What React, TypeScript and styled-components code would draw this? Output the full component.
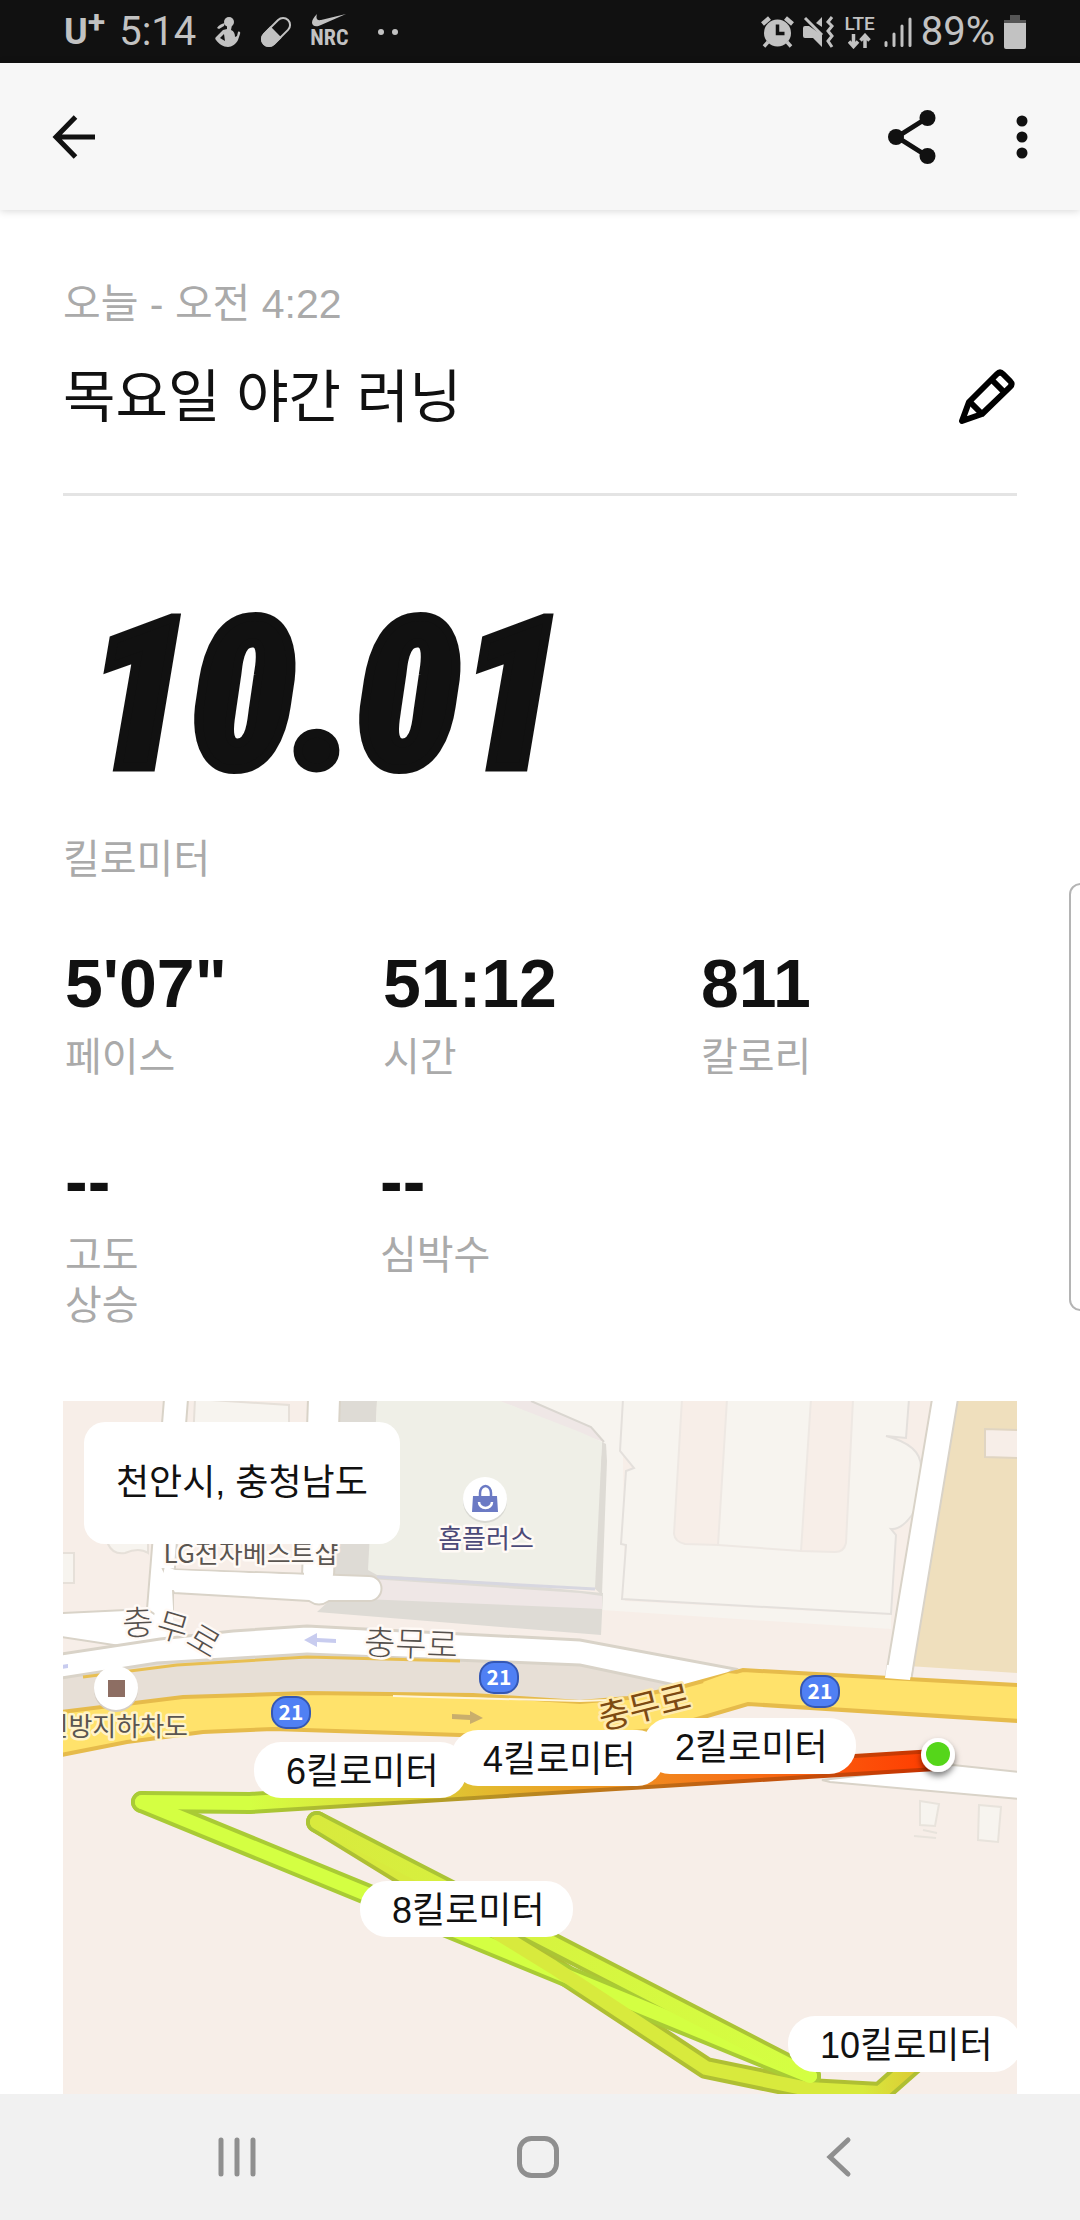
import React from 'react';
import styled, { createGlobalStyle } from 'styled-components';

const ink = '#111111';
const muted = '#aaaaaa';
const statusInk = '#c2c2c2';
const textFont = '"Liberation Sans", "Noto Sans CJK KR", sans-serif';
const mapFont = '"Noto Sans CJK KR", sans-serif';

const GlobalStyle = createGlobalStyle`
  * { box-sizing: border-box; }
  body { margin: 0; background: #ffffff; color: ${ink}; font-family: ${textFont}; }
  h1, p, dl, dd, dt { margin: 0; font-weight: 400; }
  button { border: 0; padding: 0; background: none; color: inherit; cursor: pointer; }
  svg { display: block; }
`;

const Screen = styled.div`
  display: flex;
  flex-direction: column;
  height: 100vh;
  overflow: hidden;
  position: relative;
`;

const StatusBar = styled.header`
  display: flex;
  flex: none;
  align-items: center;
  justify-content: space-between;
  height: 63px;
  padding: 0 54px 0 64px;
  background: #111111;
  color: ${statusInk};
`;

const StatusGroup = styled.div<{ $gap: number }>`
  display: flex;
  align-items: center;
  gap: ${(p) => p.$gap}px;
`;

const StatusText = styled.span`
  font: 400 40px/48px Roboto, sans-serif;
`;

const Carrier = styled.span`
  display: flex;
  align-items: flex-start;
  font: 700 36px/48px Roboto, sans-serif;
  sup { font-size: 32px; line-height: 28px; }
`;

const Stack = styled.span`
  display: flex;
  flex-direction: column;
  align-items: center;
`;

const TinyLabel = styled.span`
  font: 500 19px/18px Roboto, sans-serif;
`;

const NrcLabel = styled.span`
  font: 700 22px/22px "Roboto Condensed", Roboto, sans-serif;
`;

const AppBar = styled.nav`
  display: flex;
  flex: none;
  align-items: center;
  justify-content: space-between;
  height: 147px;
  padding: 0 28px 0 32px;
  background: #f7f7f7;
  box-shadow: 0 1px 8px rgba(0, 0, 0, 0.16);
  z-index: 1;
`;

const BarActions = styled.div`
  display: flex;
  gap: 48px;
`;

const IconButton = styled.button<{ $w: number }>`
  display: flex;
  align-items: center;
  justify-content: center;
  width: ${(p) => p.$w}px;
  height: 80px;
`;

const Content = styled.main`
  flex: 1;
  min-height: 0;
  overflow: hidden;
  padding: 69px 63px 0;
`;

const RunHeader = styled.section`
  padding-bottom: 56px;
  border-bottom: 3px solid #e4e4e4;
`;

const Caption = styled.p`
  color: ${muted};
  font-size: 41px;
  line-height: 50px;
`;

const TitleRow = styled.div`
  display: flex;
  align-items: center;
  justify-content: space-between;
  margin-top: 28px;
`;

const Title = styled.h1`
  font-size: 57px;
  line-height: 80px;
`;

const Distance = styled.section`
  margin-top: 110px;
`;

const DistanceValue = styled.p`
  padding-left: 24px;
  font: italic 900 209px/180px "Roboto Condensed", Roboto, sans-serif;
  -webkit-text-stroke: 9px ${ink};
`;

const Unit = styled.p`
  margin-top: 48px;
  color: ${muted};
  font-size: 40px;
  line-height: 50px;
`;

const StatRow = styled.dl<{ $inset: number }>`
  display: grid;
  grid-template-columns: repeat(3, 1fr);
  margin-top: 59px;
  padding-right: ${(p) => p.$inset}px;
`;

const Stat = styled.div`
  display: flex;
  flex-direction: column-reverse;
  justify-content: flex-end;
  gap: 9px;
  padding-left: 2px;
`;

const StatLabel = styled.dt`
  color: ${muted};
  font-size: 40px;
  line-height: 50px;
  white-space: pre-line;
`;

const StatValue = styled.dd`
  font-size: 68px;
  font-weight: 700;
  line-height: 80px;
`;

const MapFrame = styled.section`
  position: relative;
  margin-top: 71px;
  aspect-ratio: 1;
  overflow: hidden;
  background: #f7eee8;
`;

const MapArt = styled.svg`
  width: 100%;
  height: 100%;
`;

const PlaceCard = styled.div`
  position: absolute;
  top: 21px;
  left: 21px;
  padding: 36px 32px;
  border-radius: 21px;
  background: #ffffff;
  font-size: 36px;
  line-height: 50px;
`;

const KmPill = styled.span<{ $x: number; $y: number }>`
  position: absolute;
  left: ${(p) => (p.$x / 954) * 100}%;
  top: ${(p) => (p.$y / 954) * 100}%;
  padding: 4px 28px 0 32px;
  border-radius: 27px;
  background: #ffffff;
  font-size: 36px;
  line-height: 52px;
  white-space: nowrap;
`;

const EdgeHandle = styled.div`
  position: absolute;
  top: 883px;
  right: -12px;
  width: 23px;
  height: 428px;
  border: 2px solid #b4b4b4;
  border-radius: 14px;
  background: #ffffff;
  z-index: 2;
`;

const SystemNav = styled.nav`
  display: flex;
  flex: none;
  justify-content: center;
  height: 126px;
  padding-right: 4px;
  background: #f1f1f1;
  color: #8f8f8f;
`;

const NavButton = styled.button`
  display: flex;
  align-items: center;
  justify-content: center;
  width: 28%;
`;

const stats = [
  [
    { label: '페이스', value: '5\'07"' },
    { label: '시간', value: '51:12' },
    { label: '칼로리', value: '811' },
  ],
  [
    { label: '고도\n상승', value: '--' },
    { label: '심박수', value: '--' },
  ],
];

const markers = [
  { km: 6, x: 191, y: 341 },
  { km: 4, x: 388, y: 329 },
  { km: 2, x: 580, y: 317 },
  { km: 8, x: 297, y: 480 },
  { km: 10, x: 725, y: 615 },
];

const shields = [
  [228, 311],
  [436, 276],
  [757, 290],
];

function ChildIcon() {
  return (
    <svg width="28" height="32" viewBox="0 0 28 32" fill="currentColor">
      <circle cx="15" cy="6" r="5" />
      <path d="M13 9h5l-1 5c3 1 4 4 4 7l2-1 1-4c1-1 3 0 2 2l-2 6c-2 4-6 7-10 7-5 0-9-3-12-7-1-1-1-2 0-3l7-7 4-1z" />
      <path d="M3 12c2-3 4-4 8-5l-1 3-5 3z" />
      <path d="M6 22l4-4 1 7z" fill="#111111" />
    </svg>
  );
}

function PillIcon() {
  return (
    <svg width="32" height="32" viewBox="0 0 32 32">
      <g transform="rotate(45 16 16)">
        <rect x="9" y="-1" width="14" height="34" rx="7" fill="none" stroke="currentColor" strokeWidth="2" />
        <path d="M8 16h16v10a8 8 0 0 1-16 0z" fill="currentColor" />
      </g>
    </svg>
  );
}

function Swoosh() {
  return (
    <svg width="34" height="13" viewBox="0 0 34 13" fill="currentColor">
      <path d="M34 0L9 11C4 13.500 0 12 0 8.500 0 6 2 3 5 0 4 3 4 7 9 6z" />
    </svg>
  );
}

function AlarmIcon() {
  return (
    <svg width="33" height="32" viewBox="0 0 33 32">
      <circle cx="16.500" cy="17" r="13.500" fill="currentColor" />
      <path d="M1.500 8l7-6M31.500 8l-7-6" stroke="currentColor" strokeWidth="4.500" />
      <path d="M7 26l-4 4.500M26 26l4 4.500" stroke="currentColor" strokeWidth="3.500" />
      <path d="M16.500 8.500v9h7" fill="none" stroke="#111111" strokeWidth="3.500" />
    </svg>
  );
}

function MuteIcon() {
  return (
    <svg width="32" height="32" viewBox="0 0 32 32">
      <path d="M2 10h4l13 9v12l-9-9H2q-2 0-2-2v-8q0-2 2-2zM13 7l6-6v10z" fill="currentColor" />
      <path d="M2 2l17 17" stroke="currentColor" strokeWidth="3" />
      <path d="M29 1l-4 5 4 4-4 5 4 5-4 5 4 6" fill="none" stroke="currentColor" strokeWidth="3" />
    </svg>
  );
}

function DataArrows() {
  return (
    <svg width="23" height="16" viewBox="0 0 23 16" fill="none" stroke="currentColor" strokeWidth="3.500">
      <path d="M5.500 1v12M1 8.500L5.500 13.500 10 8.500M17 15V3M12.500 7.500L17 2.500l4.500 5" />
    </svg>
  );
}

function SignalIcon() {
  return (
    <svg width="28" height="30" viewBox="0 0 28 30" stroke="currentColor" strokeWidth="3" strokeLinecap="round">
      <path d="M2 25.500v3M10 17v11.500M18 9v19.500M26 2v26.500" />
    </svg>
  );
}

function BatteryIcon() {
  return (
    <svg width="22" height="34" viewBox="0 0 22 34">
      <path d="M6 0h10v5h6v4H0V5h6z" fill="#555555" />
      <path d="M0 8h22v24q0 2-2 2H2q-2 0-2-2z" fill="currentColor" />
    </svg>
  );
}

function Shield({ x, y }: { x: number; y: number }) {
  return (
    <g>
      <rect x={x - 19} y={y - 15} width="38" height="31" rx="14" fill="#5080f4" stroke="#3457b4" strokeWidth="2" />
      <text x={x} y={y + 8} textAnchor="middle" fill="#ffffff" fontSize="21" fontWeight="700">21</text>
    </g>
  );
}

const firstHalf = 'M872 359L187 402L79 401';
const eastward = 'M79 401L747 675';
const westward = 'M747 675L254 421';
const finalLeg = 'M254 421L490 566L643 667L745 688L817 692L885 632';

function CityMap() {
  return (
    <MapArt viewBox="0 0 954 954" role="img" aria-label="러닝 경로 지도" fontFamily={mapFont}>
      <defs>
        <linearGradient id="fast" gradientUnits="userSpaceOnUse" x1="187" y1="0" x2="872" y2="0">
          <stop offset="0" stopColor="#d4ff42" />
          <stop offset="0.150" stopColor="#dae43c" />
          <stop offset="0.300" stopColor="#e0c332" />
          <stop offset="0.460" stopColor="#eba025" />
          <stop offset="0.700" stopColor="#f67318" />
          <stop offset="1" stopColor="#ff3c00" />
        </linearGradient>
        <linearGradient id="fastEdge" gradientUnits="userSpaceOnUse" x1="187" y1="0" x2="872" y2="0">
          <stop offset="0" stopColor="#a9cb35" />
          <stop offset="0.150" stopColor="#aeb22f" />
          <stop offset="0.460" stopColor="#bb7f1d" />
          <stop offset="1" stopColor="#c93200" />
        </linearGradient>
        <linearGradient id="back" gradientUnits="userSpaceOnUse" x1="747" y1="675" x2="254" y2="421">
          <stop offset="0" stopColor="#d4ff42" />
          <stop offset="1" stopColor="#d8ea3d" />
        </linearGradient>
        <linearGradient id="finish" gradientUnits="userSpaceOnUse" x1="800" y1="0" x2="885" y2="0">
          <stop offset="0" stopColor="#d8ea3d" />
          <stop offset="1" stopColor="#deb82e" />
        </linearGradient>
        <filter id="drop" x="-50%" y="-50%" width="200%" height="200%">
          <feDropShadow dx="0" dy="4" stdDeviation="3" floodOpacity="0.500" />
        </filter>
        <path id="curveName" d="M60 236Q104 226 152 262" />
      </defs>

      {/* blocks and buildings */}
      <g stroke="#e6e0d9" strokeWidth="2" fill="#f7f4ef">
        <path d="M132 -2L226 4V40H130z" />
        <path d="M-2 152H11V182H-2z" />
        <path d="M45 143Q50 154 62 152Q76 146 85 152V120H45z" />
      </g>
      <path d="M440 0H560V60L562 200L828 214V228L539 209V60z" fill="#f7f4ef" />
      <path d="M277 0H314L307 170L540 192L538 234L254 211L266 200L300 195L271 174z" fill="#dedbd5" />
      <path d="M539 41L543 43L544 60L539 194L530 186z" fill="#dedbd5" />
      <path d="M437 0H468L528 26L541 41L517 33z" fill="#efe7e6" />
      <path d="M468 0L528 26L541 41" fill="none" stroke="#dad6d0" strokeWidth="2" />
      <path d="M307 178L517 192L539 195V208L517 207L300 198z" fill="#efe7e6" />
      <path d="M314 0H437L517 31L539 41L532 187L314 174L305 169z" fill="#efefe7" />
      <path d="M314 176L532 188" stroke="#d7d7e0" strokeWidth="3" />
      <path
        d="M560 -2H846L843 37L823 35Q858 44 858 66Q858 98 849 114Q838 129 828 128L833 134L828 213L559 198L563 144L558 143L563 70L571 67L557 50z"
        fill="#f7f4ef"
        stroke="#e4e0dc"
        strokeWidth="2"
      />
      <g fill="#f7eee8" stroke="#eee8e3" strokeWidth="2">
        <path d="M619 -2H664L655 144L622 143Q612 141 611 133z" />
        <path d="M748 -2H790L783 142Q781 151 772 151L738 150z" />
        <path d="M655 144L738 150" />
      </g>
      <path d="M890 -2H954V272L845 265z" fill="#efdfbd" />
      <path d="M922 28L956 29V57L922 56z" fill="#f7eee8" stroke="#e0d5c2" strokeWidth="2" />
      <g fill="#f7f4ef" stroke="#e8e3dc" strokeWidth="2">
        <path d="M857 400L876 403L872 425L857 424zM860 429L874 432M851 435L873 437" />
        <path d="M916 404L938 406L935 441L915 439z" />
      </g>

      {/* side streets */}
      <g stroke="#d9d3c8" strokeWidth="2" fill="#ffffff">
        <path d="M101 -2H125L110 192V240H80L84 208z" />
        <path d="M245 -2H277L271 176H239z" />
        <path d="M869 -2H895L848 280H822z" />
        <path d="M759 379L890 364L956 371V398L767 381z" />
        <path d="M100 168L306 175A12 12 0 0 1 306 200L266 200Q256 207 246 200L111 192z" />
        <path d="M-2 212L84 208L130 240L90 250L-2 236z" />
      </g>
      <path d="M102 165L86 238L112 242L109 189L262 198L270 174L269 160L241 160V174L112 169z" fill="#ffffff" />

      {/* main road */}
      <path d="M0 270L114 256L244 250L520 262L622 285L565 300L240 296L120 300L0 314z" fill="#e7dfd6" />
      <path
        d="M-2 253L97 238L170 230L244 225L517 239L672 268L640 290L517 264L244 253L94 262L-2 277z"
        fill="#ffffff"
        stroke="#d9d3c8"
        strokeWidth="3"
      />
      <path d="M20 276L114 264L244 256L397 260" fill="none" stroke="#e8bf52" strokeWidth="3" />
      <path
        d="M-2 311L120 296L244 292L410 294L517 301L565 297L622 285L680 269L956 284V320L685 303L600 328L500 338L397 334L210 328L140 331L64 341L-2 354z"
        fill="#ffe26b"
        stroke="#e6bb4b"
        strokeWidth="4"
      />
      <path d="M330 295L517 300L545 299" fill="none" stroke="#fff4d8" strokeWidth="2" />
      <path d="M640 281L665 272L685 274L650 296z" fill="#ffe26b" />
      <path d="M824 264L849 265L847 279L822 277z" fill="#ffffff" />
      <path d="M241 239L254 232V237L273 238V242L254 241V246z" fill="#c8ccef" />
      <path d="M420 317L407 310V314L389 313V318L407 319V323z" fill="#c9ae6c" />
      <path d="M-2 264L5 263V267L-2 268z" fill="#c8ccef" />

      {/* place names */}
      <g paintOrder="stroke" stroke="#fffaf6" strokeWidth="5" strokeLinejoin="round">
        <g fill="#55504c" fontSize="34" fontWeight="300">
          <text><textPath href="#curveName">충무로</textPath></text>
          <text x="348" y="255" textAnchor="middle" transform="rotate(2 348 242)">충무로</text>
        </g>
        <text x="582" y="318" textAnchor="middle" fontSize="34" fill="#7d4a12" stroke="#ffebae" transform="rotate(-14 582 308)">충무로</text>
        <g fill="#5a5550" fontSize="26">
          <text x="188" y="162" textAnchor="middle">LG전자베스트샵</text>
          <text x="125" y="335" textAnchor="end" stroke="#fff3c9">신방지하차도</text>
          <text x="423" y="147" textAnchor="middle" fill="#4c4a78">홈플러스</text>
        </g>
      </g>
      <circle cx="53" cy="289" r="22" fill="#d5cdc4" />
      <circle cx="53" cy="287" r="22" fill="#ffffff" />
      <rect x="45" y="279" width="17" height="17" fill="#8d6e63" />
      <circle cx="422" cy="100" r="22" fill="#d9d9d3" />
      <circle cx="422" cy="98" r="22" fill="#ffffff" />
      <path d="M410 95H434L435 111H409z" fill="#6b7ac4" />
      <path d="M417 96V92a5.500 7 0 0 1 11 0V96" fill="none" stroke="#6b7ac4" strokeWidth="2.500" />
      <path d="M416 101a6.500 6 0 0 0 13 0" fill="none" stroke="#ffffff" strokeWidth="2.500" />
      {shields.map(([x, y]) => (
        <Shield key={x} x={x} y={y} />
      ))}

      {/* recorded route, coloured by pace */}
      <g fill="none" strokeLinecap="round" strokeLinejoin="round">
        <g strokeWidth="22">
          <path d={firstHalf} stroke="url(#fastEdge)" />
          <path d={finalLeg} stroke="#afbf33" />
          <path d={westward} stroke="#abc435" />
          <path d={eastward} stroke="#a9cb35" />
        </g>
        <g strokeWidth="14">
          <path d={firstHalf} stroke="url(#fast)" />
          <path d={eastward} stroke="#d4ff42" />
          <path d={finalLeg} stroke="url(#finish)" />
          <path d={westward} stroke="url(#back)" />
        </g>
      </g>
      <circle cx="875" cy="354" r="17" fill="#ffffff" filter="url(#drop)" />
      <circle cx="875" cy="353" r="12" fill="#55d61a" />
    </MapArt>
  );
}

export default function App() {
  return (
    <Screen>
      <GlobalStyle />
      <StatusBar>
        <StatusGroup $gap={18}>
          <StatusGroup $gap={14}>
            <Carrier>U<sup>+</sup></Carrier>
            <StatusText>5:14</StatusText>
          </StatusGroup>
          <StatusGroup $gap={18}>
            <ChildIcon />
            <PillIcon />
            <Stack>
              <Swoosh />
              <NrcLabel>NRC</NrcLabel>
            </Stack>
            <svg width="32" height="8" viewBox="0 0 32 8" fill="currentColor">
              <circle cx="14" cy="4" r="3" />
              <circle cx="28" cy="4" r="3" />
            </svg>
          </StatusGroup>
        </StatusGroup>
        <StatusGroup $gap={9}>
          <AlarmIcon />
          <MuteIcon />
          <Stack>
            <TinyLabel>LTE</TinyLabel>
            <DataArrows />
          </Stack>
          <SignalIcon />
          <StatusText>89%</StatusText>
          <BatteryIcon />
        </StatusGroup>
      </StatusBar>

      <AppBar>
        <IconButton $w={84} aria-label="뒤로">
          <svg width="44" height="44" viewBox="0 0 44 44" fill="none" stroke="currentColor" strokeWidth="5">
            <path d="M43 22H4M23.500 2L4 22l19.500 20" />
          </svg>
        </IconButton>
        <BarActions>
          <IconButton $w={64} aria-label="공유">
            <svg width="48" height="54" viewBox="0 0 48 54">
              <path d="M39 8L9 27l30 19" fill="none" stroke="currentColor" strokeWidth="5" />
              <g fill="currentColor">
                <circle cx="39.500" cy="8" r="8" />
                <circle cx="8" cy="27" r="8" />
                <circle cx="39.500" cy="46" r="8" />
              </g>
            </svg>
          </IconButton>
          <IconButton $w={60} aria-label="더보기">
            <svg width="12" height="44" viewBox="0 0 12 44" fill="currentColor">
              <circle cx="6" cy="6" r="5.500" />
              <circle cx="6" cy="22" r="5.500" />
              <circle cx="6" cy="38" r="5.500" />
            </svg>
          </IconButton>
        </BarActions>
      </AppBar>

      <Content>
        <RunHeader>
          <Caption>오늘 - 오전 4:22</Caption>
          <TitleRow>
            <Title>목요일 야간 러닝</Title>
            <IconButton $w={60} aria-label="이름 수정">
              <svg width="60" height="60" viewBox="0 0 60 60" fill="none" stroke="#000000" strokeWidth="6" strokeLinejoin="round">
                <path d="M5 54L12 35L40 7Q43 4 46 7L53 14Q56 17 53 20L25 47z" />
                <path d="M35 13L47 25M13 35L24 46" />
              </svg>
            </IconButton>
          </TitleRow>
        </RunHeader>

        <Distance>
          <DistanceValue>10.01</DistanceValue>
          <Unit>킬로미터</Unit>
        </Distance>

        {stats.map((row, i) => (
          <StatRow key={i} $inset={i * 9}>
            {row.map((s) => (
              <Stat key={s.label}>
                <StatLabel>{s.label}</StatLabel>
                <StatValue>{s.value}</StatValue>
              </Stat>
            ))}
          </StatRow>
        ))}

        <MapFrame>
          <CityMap />
          <PlaceCard>천안시, 충청남도</PlaceCard>
          {markers.map((m) => (
            <KmPill key={m.km} $x={m.x} $y={m.y}>{m.km}킬로미터</KmPill>
          ))}
        </MapFrame>
      </Content>

      <EdgeHandle />

      <SystemNav>
        <NavButton aria-label="최근 앱">
          <svg width="40" height="42" viewBox="0 0 40 42" stroke="currentColor" strokeWidth="5" strokeLinecap="round">
            <path d="M4 4v34M20 4v34M36 4v34" />
          </svg>
        </NavButton>
        <NavButton aria-label="홈">
          <svg width="42" height="42" viewBox="0 0 42 42" fill="none" stroke="currentColor" strokeWidth="5">
            <rect x="2.500" y="2.500" width="37" height="37" rx="12" />
          </svg>
        </NavButton>
        <NavButton aria-label="이전">
          <svg width="26" height="42" viewBox="0 0 26 42" fill="none" stroke="currentColor" strokeWidth="5" strokeLinecap="round">
            <path d="M22 4L4 21l18 17" />
          </svg>
        </NavButton>
      </SystemNav>
    </Screen>
  );
}
